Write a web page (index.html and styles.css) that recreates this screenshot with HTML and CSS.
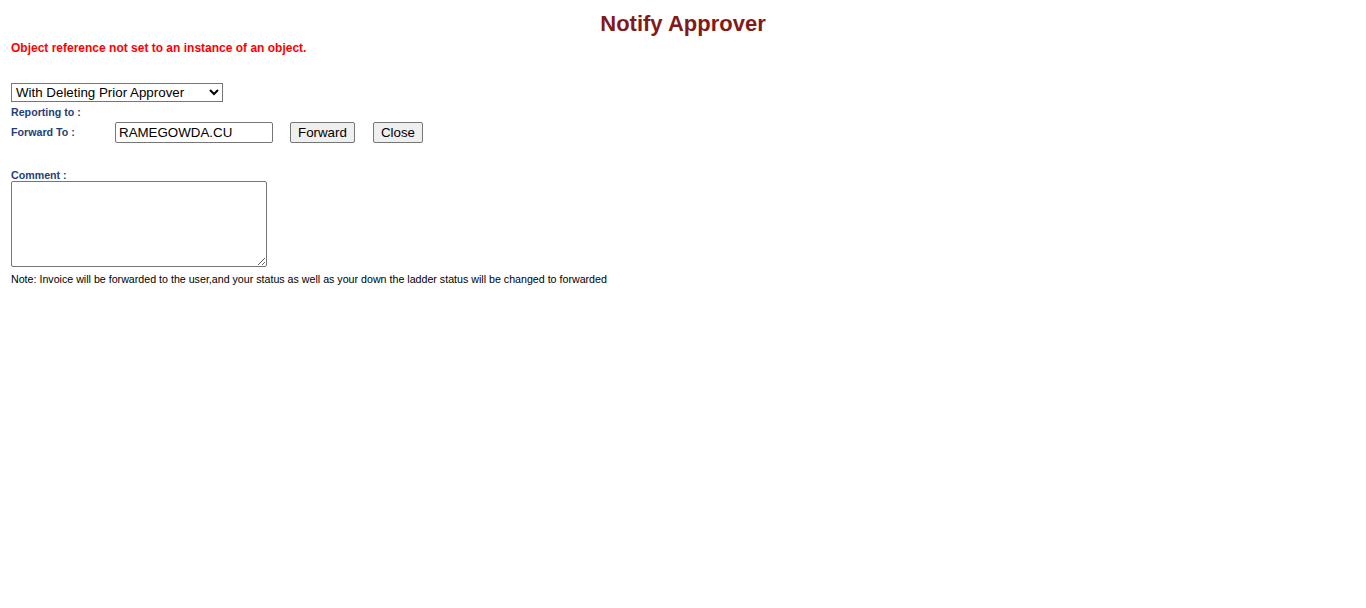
FILE: index.html
```html
<!DOCTYPE html>
<html>
<head>
<meta charset="utf-8">
<title>Notify Approver</title>
<link rel="stylesheet" href="styles.css">
</head>
<body>
<div class="page">
  <h1 class="title">Notify Approver</h1>
  <div class="error">Object reference not set to an instance of an object.</div>
  <div class="select-row">
    <select class="mode">
      <option>With Deleting Prior Approver</option>
      <option>Without Deleting Prior Approver</option>
    </select>
  </div>
  <div class="label reporting">Reporting to :</div>
  <div class="forward-row">
    <span class="label fwd-label">Forward To :</span>
    <input class="user" type="text" value="RAMEGOWDA.CU">
    <button class="btn">Forward</button>
    <button class="btn">Close</button>
  </div>
  <div class="label comment-label">Comment :</div>
  <textarea class="comment"></textarea>
  <div class="note">Note: Invoice will be forwarded to the user,and your status as well as your down the ladder status will be changed to forwarded</div>
</div>
</body>
</html>
```
FILE: styles.css
```css
body {
  margin: 8px;
  font-family: "Liberation Sans", Arial, sans-serif;
  background: #ffffff;
}
.page {
  display: flex;
  flex-direction: column;
  align-items: flex-start;
}
.title {
  align-self: stretch;
  text-align: center;
  margin: 3px 0 0 0;
  font-size: 22px;
  line-height: 26px;
  font-weight: bold;
  color: #821a1a;
}
.error {
  margin: 4px 0 0 3px;
  font-size: 12px;
  line-height: 14px;
  font-weight: bold;
  color: #ff0000;
}
.select-row {
  margin: 28px 0 0 3px;
}
.mode {
  width: 212px;
  height: 19px;
  font-family: "Liberation Sans", Arial, sans-serif;
  font-size: 13.33px;
  color: #000;
  border: 1px solid #767676;
  border-radius: 0;
  padding: 0;
  background: #fff;
  margin: 0;
}
.label {
  font-size: 10.67px;
  line-height: 13px;
  font-weight: bold;
  color: #1f3f7a;
}
.reporting {
  margin: 4px 0 0 3px;
}
.forward-row {
  display: flex;
  align-items: center;
  margin: 3px 0 0 3px;
  height: 21px;
}
.fwd-label {
  width: 104px;
}
.user {
  box-sizing: border-box;
  width: 158px;
  height: 21px;
  margin: 0;
  padding: 1px 3px;
  font-family: "Liberation Sans", Arial, sans-serif;
  font-size: 13.33px;
  color: #000;
  border: 1px solid #767676;
  border-radius: 2px;
}
.btn {
  box-sizing: border-box;
  height: 21px;
  margin: 0 0 0 17px;
  padding: 1px 7px;
  font-family: "Liberation Sans", Arial, sans-serif;
  font-size: 13.33px;
  color: #000;
  background: #efefef;
  border: 1px solid #767676;
  border-radius: 2px;
}
.btn + .btn {
  margin-left: 18px;
}
.comment-label {
  margin: 26px 0 0 3px;
  line-height: 12px;
}
.comment {
  box-sizing: border-box;
  width: 256px;
  height: 86px;
  margin: 0 0 0 3px;
  border: 1px solid #767676;
  border-radius: 2px;
  font-family: "Liberation Mono", monospace;
  font-size: 13px;
  resize: both;
}
.note {
  margin: 6px 0 0 3px;
  font-size: 10.67px;
  line-height: 13px;
  color: #000;
}
```
